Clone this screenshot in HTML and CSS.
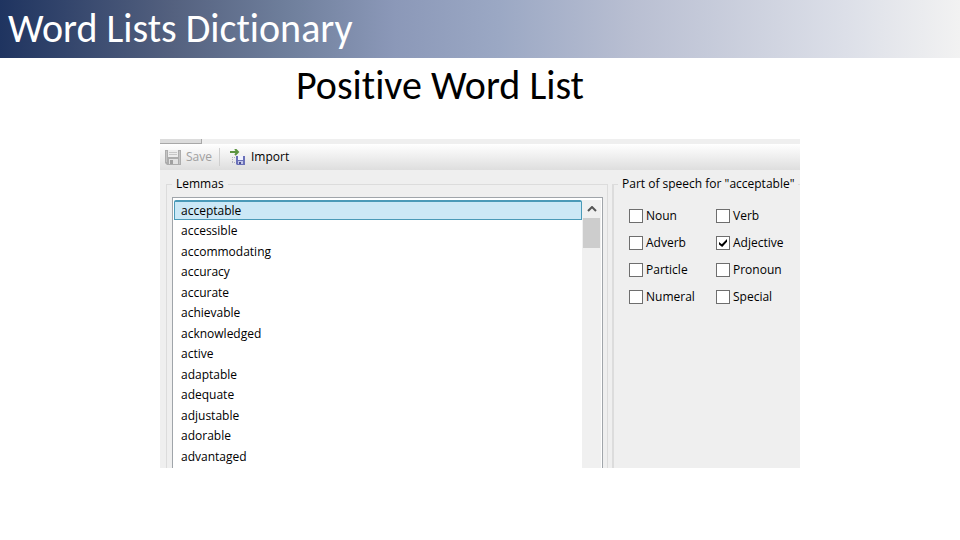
FILE: index.html
```
<!DOCTYPE html>
<html lang="en">
<head>
    <meta charset="UTF-8">
    <meta name="viewport" content="width=device-width, initial-scale=1.0">
    <title>Word Lists Dictionary</title>
    <link rel="stylesheet" href="styles.css">
</head>
<body>
    <header class="banner">
        <h1>Word Lists Dictionary</h1>
    </header>
    <main>
        <h2>Positive Word List</h2>

        <section class="editor">
            <div class="tab-strip"><div class="tab"></div></div>
            <div class="toolbar">
                <button type="button" class="tool" disabled>
                    <svg width="16" height="16" viewBox="0 0 16 16">
                        <path d="M0 1h16v15H2l-2-2z" fill="#acacac"/>
                        <path d="M3 1h10v7H3z" fill="#ececec"/>
                        <path d="M4 3.5h8M4 5.5h8" stroke="#c6c6c6"/>
                        <path d="M4 10h9v5H4z" fill="#e2e2e2"/>
                        <path d="M5 11h3v4H5z" fill="#a0a0a0"/>
                        <path d="M1.5 2v11M14.5 2v13" stroke="#c4c4c4"/>
                    </svg>
                    Save
                </button>
                <span class="separator"></span>
                <button type="button" class="tool">
                    <svg width="16" height="16" viewBox="0 0 16 16">
                        <path d="M0 3h8M5 0l3 3-3 3" fill="none" stroke="#5c9440" stroke-width="2"/>
                        <path d="M2 8.5h4M2.5 8v6M2 13.5h4" fill="none" stroke="#b0b0c0" stroke-dasharray="1 1"/>
                        <path d="M6 7h9v9H7l-1-1z" fill="#6a70b8"/>
                        <path d="M8 7h5v4H8z" fill="#f0f2ff"/>
                        <path d="M8 12h5v3H8z" fill="#c3c6e8"/>
                        <path d="M9 13h2v2H9z" fill="#4a4f8f"/>
                    </svg>
                    Import
                </button>
            </div>

            <div class="panes">
                <fieldset class="lemmas">
                    <legend><label for="lemmas">Lemmas</label></legend>
                    <div class="list">
                        <select id="lemmas" size="13">
                            <option selected>acceptable</option>
                            <option>accessible</option>
                            <option>accommodating</option>
                            <option>accuracy</option>
                            <option>accurate</option>
                            <option>achievable</option>
                            <option>acknowledged</option>
                            <option>active</option>
                            <option>adaptable</option>
                            <option>adequate</option>
                            <option>adjustable</option>
                            <option>adorable</option>
                            <option>advantaged</option>
                        </select>
                        <div class="scrollbar">
                            <svg width="10" height="6" viewBox="0 0 10 6">
                                <path d="M1 5l4-4 4 4" fill="none" stroke="#555" stroke-width="2"/>
                            </svg>
                            <div class="thumb"></div>
                        </div>
                    </div>
                </fieldset>

                <fieldset class="speech">
                    <legend>Part of speech for "acceptable"</legend>
                    <div class="checks">
                        <label><input type="checkbox">Noun</label>
                        <label><input type="checkbox">Verb</label>
                        <label><input type="checkbox">Adverb</label>
                        <label><input type="checkbox" checked>Adjective</label>
                        <label><input type="checkbox">Particle</label>
                        <label><input type="checkbox">Pronoun</label>
                        <label><input type="checkbox">Numeral</label>
                        <label><input type="checkbox">Special</label>
                    </div>
                </fieldset>
            </div>
        </section>
    </main>
</body>
</html>
```

FILE: styles.css
```
* {
    box-sizing: border-box;
}
body {
    margin: 0;
    background: #fff;
    color: #000;
    font-family: Carlito, Lato, sans-serif;
}
h1, h2 {
    margin: 0;
    font-size: 40px;
    font-weight: 400;
    font-variant-ligatures: none;
    line-height: 50px;
}
.banner {
    padding: 4px 8px;
    background: linear-gradient(90deg, #1f3460, #54617f 18%, #6f7f9c 30%, #8b98b8 41%, #9ba8c4 52%, #b9bfd2 66%, #dcdfe8 88%, #f2f2f2);
    color: #fff;
}
h2 {
    margin: 3px 80px 28px 0;
    text-align: center;
}
.editor {
    margin: 0 160px;
    background: #efefef;
    font-family: "Open Sans", sans-serif;
    font-size: 12px;
    line-height: 18px;
    overflow: hidden;
}
.tab-strip {
    height: 5px;
}
.tab {
    width: 42px;
    height: 5px;
    background: #dcdcdc;
    border: solid #a8a8a8;
    border-width: 0 1px 1px 0;
}
.toolbar {
    display: flex;
    align-items: center;
    height: 26px;
    padding: 0 5px;
    background: linear-gradient(#fff, #dedede);
}
.tool {
    display: flex;
    align-items: center;
    gap: 5px;
    padding: 0;
    border: 0;
    background: none;
    color: #000;
    font: inherit;
}
.tool:disabled {
    color: #a0a0a0;
}
.separator {
    width: 1px;
    height: 18px;
    margin: 0 10px 0 7px;
    background: #cfcfcf;
}
.panes {
    display: flex;
    gap: 4px;
    padding: 5px 0 0 6px;
}
fieldset {
    min-width: 0;
    margin: 0;
    border: solid #dcdcdc;
}
legend {
    padding: 0 4px;
    white-space: nowrap;
}
.lemmas {
    flex: 1;
    padding: 4px 4px 0 5px;
    border-width: 1px 1px 0 1px;
}
.list {
    display: flex;
    padding: 2px 1px 0;
    border: solid #a0a5aa;
    border-width: 1px 1px 0;
    background: #fff;
}
select {
    flex: 1;
    height: 268px;
    padding: 0;
    border: 0;
    outline: 0;
    background: #fff;
    font: inherit;
    overflow: hidden;
}
option {
    height: 20px;
    min-height: 20px;
    padding: 2px 7px 0;
    border: 0;
    color: #000;
    line-height: 18px;
}
option:nth-child(even) {
    height: 21px;
}
option:checked {
    padding: 0 6px;
    border: 1px solid #4a9ab8;
    border-top-width: 2px;
    background: linear-gradient(#cbe8f6, #cbe8f6);
    color: #000;
    line-height: 17px;
}
.scrollbar {
    display: flex;
    flex-direction: column;
    align-items: center;
    gap: 6px;
    width: 19px;
    padding: 6px 1px 0;
    background: #f0f0f0;
}
.thumb {
    width: 17px;
    height: 30px;
    background: #cdcdcd;
}
.speech {
    width: 188px;
    padding: 14px 0 0 15px;
    border-width: 1px 0 0 2px;
}
.speech legend {
    margin-left: -11px;
}
.checks {
    display: grid;
    grid-template-columns: 87px 1fr;
    row-gap: 9px;
}
.checks label {
    display: flex;
    align-items: center;
    gap: 3px;
}
.checks input {
    appearance: none;
    width: 14px;
    height: 14px;
    margin: 0;
    border: 1px solid #6e6e6e;
    background: #fff;
}
.checks input:checked::before {
    content: "";
    display: block;
    width: 8px;
    height: 8px;
    margin: 2px;
    background: #000;
    clip-path: polygon(0 38%, 35% 65%, 100% 0, 100% 35%, 40% 100%, 0 70%);
}
```
